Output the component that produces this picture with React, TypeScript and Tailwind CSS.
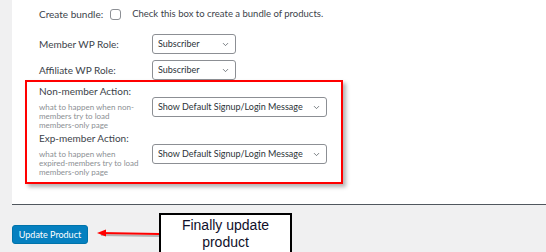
import { ChevronDown } from 'lucide-react'

interface SelectBoxProps {
  value: string
  width: string
}

function SelectBox({ value, width }: SelectBoxProps) {
  return (
    <div
      className={`${width} h-[20px] shrink-0 flex items-center justify-between border border-[#8c8f94] rounded-[3px] bg-white pl-[5px] pr-[5px] text-[9px] text-[#2c3338]`}
    >
      <span className="whitespace-nowrap">{value}</span>
      <ChevronDown className="w-[9px] h-[9px] text-[#50575e]" strokeWidth={2} />
    </div>
  )
}

function HelpText({ lines }: { lines: string[] }) {
  return (
    <div className="w-[113px] shrink-0 mt-[6px] text-[8px] leading-[9px] text-[#8c8f94] whitespace-nowrap">
      {lines.map((line) => (
        <div key={line} className="h-[9px]">
          {line}
        </div>
      ))}
    </div>
  )
}

export default function App() {
  return (
    <div
      className="w-[546px] h-[252px] bg-[#f0f0f1] pl-[12px] overflow-hidden"
      style={{ fontFamily: 'Lato, "Noto Sans", sans-serif' }}
    >
      {/* settings panel */}
      <div className="relative h-[205px] bg-white border-b border-[#50575e] pl-[27px] pt-[4px] text-[10px] text-[#3c434a]">
        <div className="h-[20px] flex items-center">
          <span>Create bundle:</span>
          <span className="ml-[7px] w-[11px] h-[11px] border border-[#8c8f94] rounded-[3px] bg-white" />
          <span className="ml-[11px] text-[9.5px]">Check this box to create a bundle of products.</span>
        </div>

        <div className="mt-[10px] flex items-center">
          <span className="w-[113px] shrink-0">Member WP Role:</span>
          <SelectBox value="Subscriber" width="w-[84px]" />
        </div>

        <div className="mt-[6px] flex items-center">
          <span className="w-[113px] shrink-0">Affiliate WP Role:</span>
          <SelectBox value="Subscriber" width="w-[84px]" />
        </div>

        <div className="mt-[5px] leading-[12px]">Non-member Action:</div>
        <div className="flex items-start">
          <HelpText lines={['what to happen when non-', 'members try to load', 'members-only page']} />
          <SelectBox value="Show Default Signup/Login Message" width="w-[175px]" />
        </div>

        <div className="mt-[2px] leading-[12px]">Exp-member Action:</div>
        <div className="flex items-start">
          <HelpText lines={['what to happen when', 'expired-members try to load', 'members-only page']} />
          <SelectBox value="Show Default Signup/Login Message" width="w-[175px]" />
        </div>

        {/* red highlight annotation */}
        <div className="absolute left-[13px] top-[80px] w-[318px] h-[104px] border-2 border-[#ff0000] shadow-[3px_3px_4px_rgba(0,0,0,0.3)] pointer-events-none" />
      </div>

      {/* footer */}
      <div className="flex items-start pt-[8px]">
        <button className="mt-[12px] w-[76px] h-[19px] rounded-[3px] bg-[#0580c0] border border-[#0073aa] text-white text-[9px] leading-none">
          Update Product
        </button>
        <svg width="71" height="12" viewBox="0 0 71 12" className="mt-[15px]">
          <line x1="13" y1="7" x2="71" y2="8" stroke="rgba(0,0,0,0.25)" strokeWidth="2" />
          <line x1="12" y1="5" x2="71" y2="6" stroke="#ff0000" strokeWidth="2" />
          <path d="M9 5 L18 1.5 L18 8.5 Z" fill="#ff0000" />
        </svg>
        <div
          className="w-[133px] h-[42px] border-2 border-black bg-white flex flex-col items-center justify-center text-[14px] leading-[17px] text-[#10102a]"
          style={{ fontFamily: '"Liberation Sans", Arial, sans-serif' }}
        >
          <span>Finally update</span>
          <span>product</span>
        </div>
      </div>
    </div>
  )
}
